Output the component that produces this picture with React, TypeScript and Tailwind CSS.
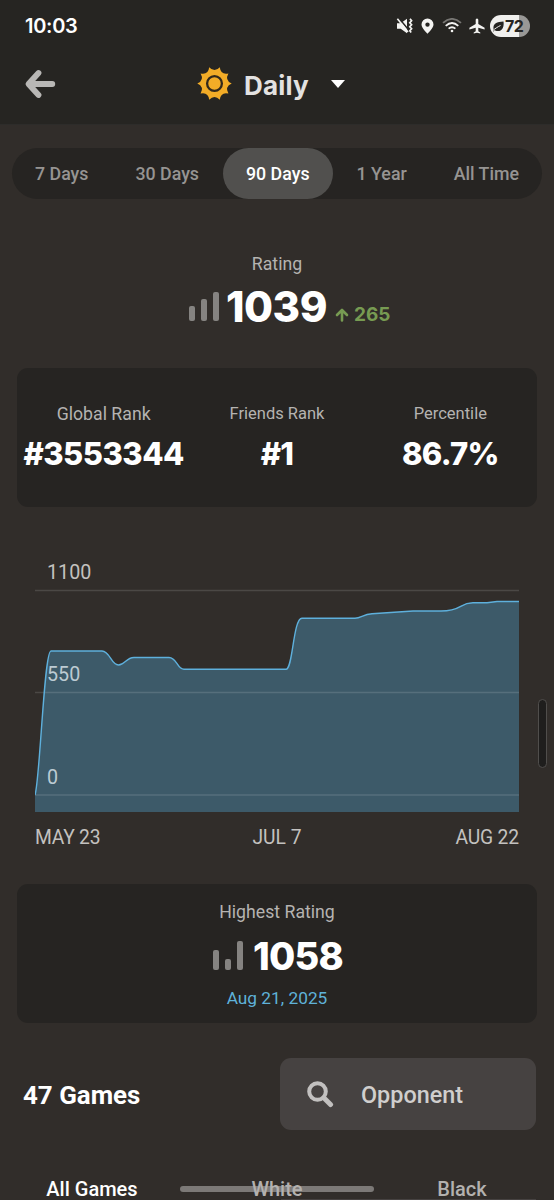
import clsx from 'clsx';

const RANGES = ['7 Days', '30 Days', '90 Days', '1 Year', 'All Time'];

const LINE =
  'M0 205 C5 190 9 61 16 61 H67 C75 61 76 75 83.500 75 C90 75 91 67.500 99 67.500 H134 C142 67.500 142 79.300 149 79.300 H251 C258 79.300 258 28.300 267 28.300 H320 C326 28.300 328 24.500 337 23.800 L378 21 H406 C427 21 424 12.800 438 12.800 H452 L462 11.500 H484';

function StatusBar() {
  return (
    <div className="flex h-[52px] items-center justify-between pl-[25px] pr-[24px] text-white">
      <span className="font-['Inter'] text-[20px] font-semibold tracking-[-0.3px]">10:03</span>
      <div className="flex items-center">
        {/* Muted speaker */}
        <svg className="mr-[8px]" width="17" height="16" viewBox="0 0 17 16" fill="none">
          <path d="M1 5.200h3.700L11 .8v14.400L4.700 10.800H1z" fill="#f4f4f2" />
          <path d="M2.800 0 13 12.500" stroke="#262522" strokeWidth="1.600" />
          <path d="M1.400 .8 12 14" stroke="#f4f4f2" strokeWidth="1.600" />
          <path d="m14 .8 1.600 2-1.800 2 1.800 2-1.800 2 1.800 2-1.800 2 1.400 1.800" stroke="#f4f4f2" strokeWidth="1.700" />
        </svg>
        {/* Location pin */}
        <svg className="mr-[8px]" width="13" height="16" viewBox="0 0 13 16" fill="#f4f4f2">
          <path fillRule="evenodd" d="M6.500.500a6 6 0 0 0-6 6c0 3.700 6 9.200 6 9.200s6-5.500 6-9.200a6 6 0 0 0-6-6m0 3.900a2.200 2.200 0 1 1 0 4.400 2.200 2.200 0 0 1 0-4.400" />
        </svg>
        {/* Wifi */}
        <svg className="mr-[7px]" width="20" height="16" viewBox="0 0 20 16" fill="none" strokeWidth="1.800">
          <path d="M1 4.900Q10-3.100 19 4.900" stroke="#777673" />
          <path d="M3.700 7.800q6.300-5.600 12.600 0M6.600 10.700q3.400-3 6.800 0" stroke="#f4f4f2" />
          <circle cx="10" cy="13" r="1.300" fill="#f4f4f2" />
        </svg>
        {/* Airplane mode */}
        <svg className="mr-[5px]" width="16" height="16" viewBox="0 0 16 16" fill="#f4f4f2">
          <path d="M8 .4c.9 0 1.300.8 1.300 1.700v4l6.300 3.700v1.800L9.300 9.700v3.500l2 1.400v1L8 14.800l-3.300.8v-1l2-1.400V9.700L.4 11.600V9.800l6.300-3.700v-4C6.700 1.200 7.100.4 8 .4" />
        </svg>
        {/* Battery with power saver leaf */}
        <div className="flex h-[22px] w-[40px] items-center overflow-hidden rounded-full bg-[linear-gradient(90deg,#f0f0ee_72%,#999896_72%)] pl-[2px] text-[#262522]">
          <svg width="13" height="13" viewBox="0 0 13 13">
            <path d="M1.500 8.500C.8 3.800 5 1.500 11.500 1.400c.7 4.500-.6 9.400-5.600 9.700-1.500.1-2.600-.4-3.200-1L1 12" fill="#262522" />
            <path d="M1 10.500C3 8.500 5.500 7 8.500 5.500" stroke="#f0f0ee" strokeWidth="1" fill="none" />
          </svg>
          <span className="font-['Inter'] text-[16px] font-bold leading-none tracking-[-0.6px]">72</span>
        </div>
      </div>
    </div>
  );
}

function SunIcon() {
  // Ten rays with curved valleys between them
  const point = (r: number, step: number) => {
    const a = (step * Math.PI) / 10;
    return `${(17.5 + r * Math.cos(a)).toFixed(2)} ${(17.5 + r * Math.sin(a)).toFixed(2)}`;
  };
  let d = `M${point(17.2, 0)}`;
  for (let i = 0; i < 10; i++) {
    d += ` Q${point(10.5, i * 2 + 1)} ${point(17.2, i * 2 + 2)}`;
  }
  return (
    <svg className="mb-[1px]" width="35" height="35" viewBox="0 0 35 35">
      <path d={`${d}Z`} fill="#f2ac27" />
      <circle cx="17.500" cy="17.500" r="7.400" fill="none" stroke="#33291b" strokeWidth="2.300" />
    </svg>
  );
}

function Header() {
  return (
    <header className="h-[125px] border-b border-[#2d2c2a] bg-[#262522]">
      <StatusBar />
      <div className="grid h-[64px] grid-cols-[197px_1fr] items-center">
        <svg className="ml-[24px]" width="32" height="32" viewBox="0 0 32 32" fill="none" stroke="#b8b7b5" strokeWidth="5.800" strokeLinecap="round" strokeLinejoin="round">
          <path d="M28.300 16H5M14.500 5 4.500 16l10 11" />
        </svg>
        <div className="flex items-center">
          <SunIcon />
          <h1 className="ml-[12px] mt-[4px] w-[66px] whitespace-nowrap font-['Inter'] text-[26px] font-bold leading-8 tracking-[0.2px] text-[#e3e2e1]">Daily</h1>
          <svg className="ml-[21px]" width="14" height="8" viewBox="0 0 14 8">
            <path d="M0 0h14L7 8z" fill="#fff" />
          </svg>
        </div>
      </div>
    </header>
  );
}

function Bars({ heights }: { heights: number[] }) {
  return (
    <div className="flex h-[30px] items-end gap-[6px]">
      {heights.map((h) => (
        <div key={h} className="w-[6px] rounded-[2px] bg-[#858381]" style={{ height: h }} />
      ))}
    </div>
  );
}

function Label({ children, small }: { children: string; small?: boolean }) {
  return (
    <p className={clsx('whitespace-nowrap leading-6 text-[#b5b3b1]', small ? 'text-[16.500px]' : 'text-[17.700px]')}>{children}</p>
  );
}

function Stat({ label, value, small }: { label: string; value: string; small?: boolean }) {
  return (
    <div className="flex flex-col items-center pt-[34px]">
      <Label small={small}>{label}</Label>
      <p
        className={clsx(
          "mt-[8px] font-['Inter'] text-[31px] font-extrabold leading-[40px] text-white",
          small ? 'tracking-[-0.700px]' : 'tracking-[-0.500px]'
        )}
      >
        {value}
      </p>
    </div>
  );
}

function RatingChart() {
  return (
    <svg className="ml-[35px] mt-[53px] block" width="490" height="290" viewBox="0 -30 490 290">
      <path d={`${LINE} V222 H0 Z`} fill="#3d5a69" />
      <path d="M0 .5H484M0 102.500H484M0 205H484" stroke="#fff" strokeOpacity="0.130" strokeWidth="1.300" />
      <path d={LINE} fill="none" stroke="#5eb0dc" strokeWidth="1.400" />
      <g fill="#c3c1bf" fontSize="19.700">
        <text x="12" y="-11">1100</text>
        <text x="12" y="91" fill="#bccbd3">550</text>
        <text x="12" y="193.500" fill="#bccbd3">0</text>
      </g>
      <g fill="#c3c1bf" fontSize="19.300">
        <text x="0" y="254" textLength="65.500">MAY 23</text>
        <text x="242" y="254" textAnchor="middle">JUL 7</text>
        <text x="484" y="254" textAnchor="end" textLength="63.500">AUG 22</text>
      </g>
    </svg>
  );
}

export default function App() {
  return (
    <div className="relative h-[1200px] w-[554px] overflow-hidden bg-[#312d2a] font-['Roboto',sans-serif]">
      <Header />

      {/* Time range */}
      <nav className="mx-[12px] mt-[23px] flex h-[51px] justify-between rounded-full bg-[#262422]">
        {RANGES.map((range) => (
          <button
            key={range}
            className={clsx(
              'whitespace-nowrap rounded-full px-[23px] pt-[2px] text-[17.800px] font-medium',
              range === '90 Days' ? 'bg-[#51504e] text-white' : 'text-[#969492]'
            )}
          >
            {range}
          </button>
        ))}
      </nav>

      {/* Current rating */}
      <section className="mt-[53px] h-[116px]">
        <div className="flex justify-center">
          <Label>Rating</Label>
        </div>
        <div className="ml-[189px] mt-[8px] flex h-[37px] items-end">
          <Bars heights={[15, 22, 29]} />
          <span className="ml-[7px] w-[101px] translate-y-px whitespace-nowrap font-['Inter'] text-[42px] font-extrabold leading-[30px] tracking-[-0.5px] text-white">1039</span>
          <span className="ml-[8px] flex translate-y-px items-center gap-[5px] text-[#779b52]">
            <svg width="14" height="14" viewBox="0 0 14 14" fill="none" stroke="currentColor" strokeWidth="2.600" strokeLinecap="round" strokeLinejoin="round">
              <path d="M7 12.500V2M2 7l5-5 5 5" />
            </svg>
            <span className="font-['Inter'] text-[19px] font-bold leading-[14px]">265</span>
          </span>
        </div>
      </section>

      <section className="mx-[17px] grid h-[139px] grid-cols-3 rounded-[11px] bg-[#262422]">
        <Stat label="Global Rank" value="#3553344" />
        <Stat label="Friends Rank" value="#1" small />
        <Stat label="Percentile" value="86.7%" small />
      </section>

      <RatingChart />

      <section className="mx-[17px] mt-[34px] flex h-[139px] flex-col items-center rounded-[11px] bg-[#262422] pt-[16px]">
        <Label>Highest Rating</Label>
        <div className="mt-[16px] flex items-end pl-[2px]">
          <Bars heights={[20, 11, 29]} />
          <span className="ml-[10px] translate-y-px font-['Inter'] text-[38px] font-extrabold leading-[30px] tracking-[-0.8px] text-white">1058</span>
        </div>
        <p className="mt-[16px] text-[17.300px] leading-6 text-[#5fb2d9]">Aug 21, 2025</p>
      </section>

      {/* Games list */}
      <section className="mt-[35px] flex h-[72px] items-center justify-between pl-[23px] pr-[18px]">
        <h2 className="pt-[2px] text-[25.900px] font-bold text-white">47 Games</h2>
        <div className="flex h-[72px] w-[256px] items-center rounded-[11px] bg-[#464241] pl-[26px]">
          <svg width="28" height="28" viewBox="0 0 28 28" fill="none" stroke="#c2c0bf" strokeLinecap="round">
            <circle cx="11.500" cy="11.500" r="8.300" strokeWidth="4" />
            <path d="m18 18 6.500 6.500" strokeWidth="5" />
          </svg>
          <span className="ml-[27px] pt-[3px] text-[23.400px] font-medium text-[#d0cecd]">Opponent</span>
        </div>
      </section>
      <div className="relative z-10 mt-[48px] grid h-[22px] grid-cols-[184px_186px_184px] text-center text-[20px] font-medium leading-[22px] text-[#b3b1af]">
        <span className="text-white">All Games</span>
        <span>White</span>
        <span>Black</span>
      </div>

      <div className="absolute bottom-0 left-[281px] h-px w-[255px] bg-[#464241]" />
      {/* Edge panel handle */}
      <div className="absolute left-[538px] top-[699px] h-[69px] w-[9px] rounded-full border border-[#504e4c] bg-[#1f1e1d]" />
      {/* Home indicator */}
      <div className="absolute left-[180px] top-[1186px] h-[6px] w-[194px] rounded-full bg-[#7c7977]" />
    </div>
  );
}
